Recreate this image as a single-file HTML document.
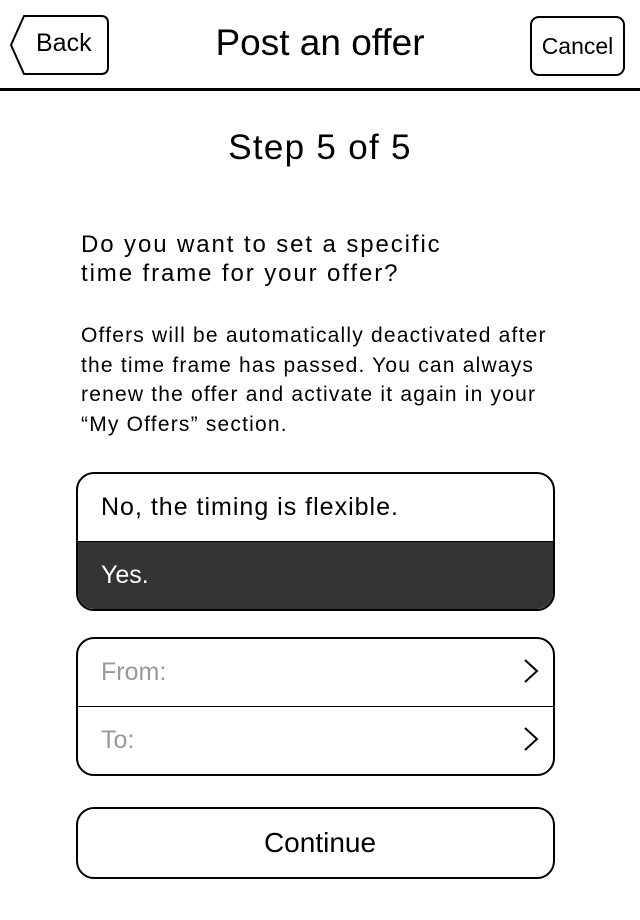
<!DOCTYPE html>
<html><head><style>
body{margin:0;width:640px;height:920px;background:#fff;font-family:"Liberation Sans","DejaVu Sans",sans-serif;color:#000;position:relative;overflow:hidden}
.a{position:absolute}
.hdr{left:0;top:88px;width:640px;height:3px;background:#000}
.title{left:0;width:640px;text-align:center;top:22px;font-size:37px}
.cancel{left:530px;top:16px;width:91px;height:56px;border:2px solid #000;border-radius:9px;font-size:23px;text-align:center;line-height:56px}
.step{left:0;width:640px;text-align:center;top:128px;font-size:35px;letter-spacing:1.3px}
.q{left:81px;top:230px;font-size:24px;line-height:29px;letter-spacing:1.9px;white-space:nowrap}
.p{left:81px;top:321px;font-size:21px;line-height:29.5px;width:540px;white-space:nowrap;letter-spacing:1.2px}
.box{left:76px;width:475px;border:2px solid #000;border-radius:18px;overflow:hidden}
.row{height:67px;line-height:67px;padding-left:23px;font-size:25px;position:relative}
.gray{color:#999}
.chev{position:absolute;right:14px;top:19px}
</style></head><body>
<svg class="a" style="left:0;top:0" width="120" height="80"><path d="M24 16 H101 Q108 16 108 23 V67 Q108 74 101 74 H24 L11 45 Z" fill="none" stroke="#000" stroke-width="2"/></svg>
<div class="a" style="left:36px;top:29px;font-size:25px">Back</div>
<div class="a title">Post an offer</div>
<div class="a cancel">Cancel</div>
<div class="a hdr"></div>
<div class="a step">Step 5 of 5</div>
<div class="a q">Do you want to set a specific<br>time frame for your offer?</div>
<div class="a p">Offers will be automatically deactivated after<br>the time frame has passed. You can always<br>renew the offer and activate it again in your<br>“My Offers” section.</div>
<div class="a box" style="top:472px;height:135px">
<div class="row" style="height:67px;border-bottom:1px solid #000;letter-spacing:1px">No, the timing is flexible.</div>
<div class="row" style="background:#333;color:#fff;height:68px">Yes.</div>
</div>
<div class="a box" style="top:637px;height:135px">
<div class="row gray" style="border-bottom:1px solid #000">From:<svg class="chev" width="16" height="26"><path d="M2 2 L14 13 L2 24" fill="none" stroke="#000" stroke-width="2"/></svg></div>
<div class="row gray">To:<svg class="chev" width="16" height="26"><path d="M2 2 L14 13 L2 24" fill="none" stroke="#000" stroke-width="2"/></svg></div>
</div>
<div class="a box" style="top:807px;height:68px;text-align:center;line-height:68px;font-size:28px;padding-left:9px;width:466px">Continue</div>
</body></html>
